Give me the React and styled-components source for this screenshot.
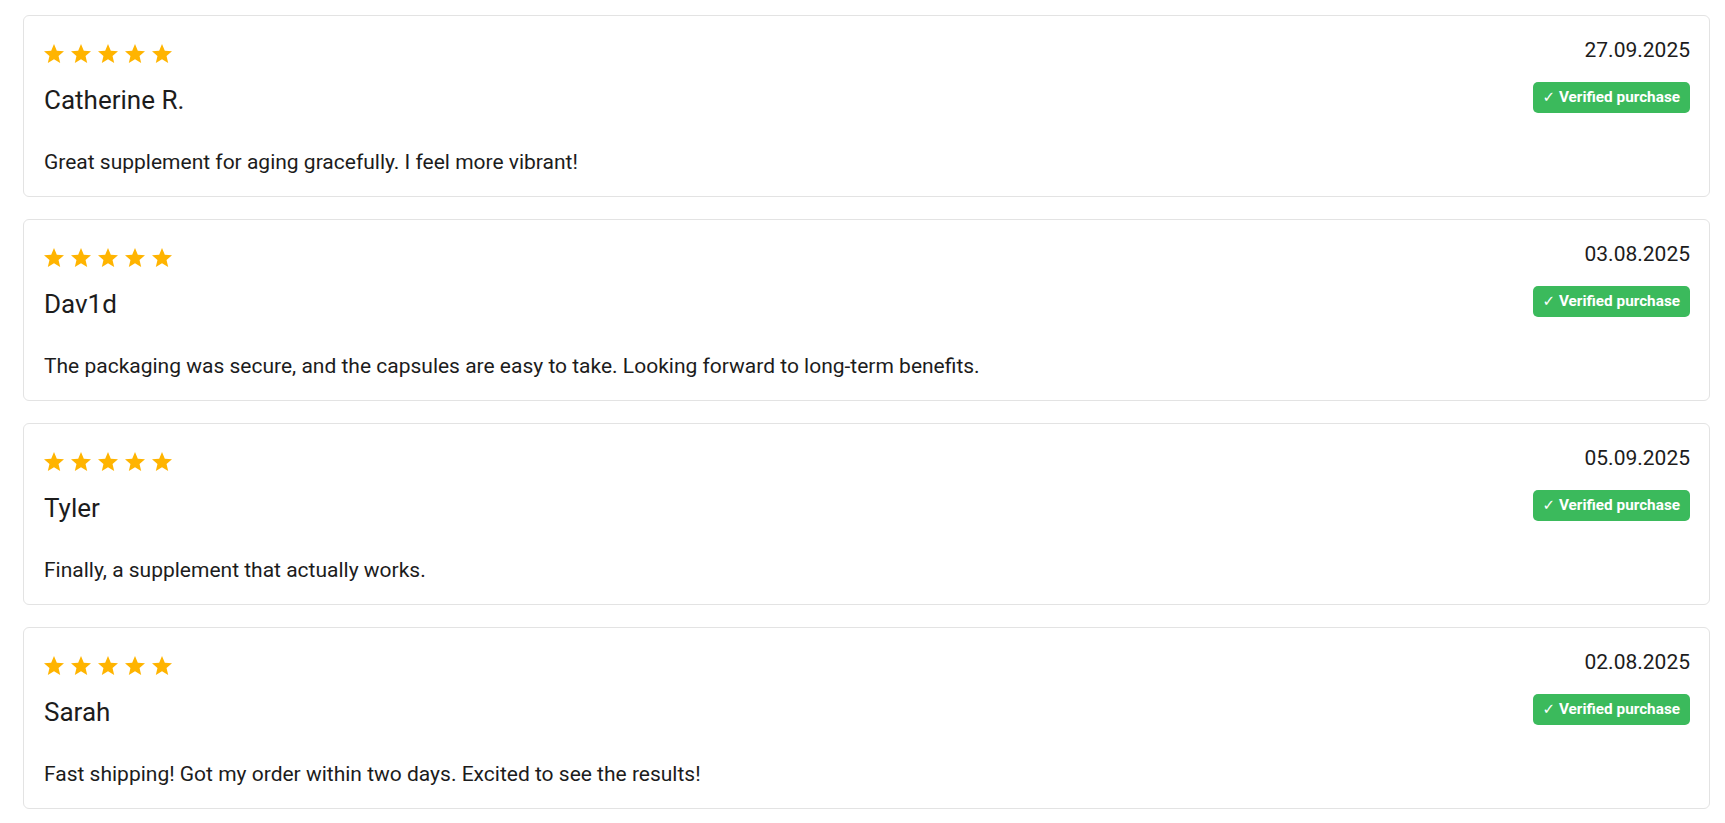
import React from "react";

// style
import styled, { createGlobalStyle } from "styled-components";

const reviews = [
  {
    name: "Catherine R.",
    date: "27.09.2025",
    text: "Great supplement for aging gracefully. I feel more vibrant!",
  },
  {
    name: "Dav1d",
    date: "03.08.2025",
    text: "The packaging was secure, and the capsules are easy to take. Looking forward to long-term benefits.",
  },
  {
    name: "Tyler",
    date: "05.09.2025",
    text: "Finally, a supplement that actually works.",
  },
  {
    name: "Sarah",
    date: "02.08.2025",
    text: "Fast shipping! Got my order within two days. Excited to see the results!",
  },
];

const Star = () => (
  <svg width="20" height="19" viewBox="2 2 20 19" aria-hidden="true">
    <path
      fill="#ffb400"
      d="M12 17.27L18.18 21l-1.64-7.03L22 9.24l-7.19-.61L12 2 9.19 8.63 2 9.24l5.46 4.73L5.82 21z"
    />
  </svg>
);

const ReviewCard = ({ review, rating = 5 }) => (
  <Card>
    <Header>
      <div>
        <Stars>
          {Array.from({ length: rating }).map((_, i) => (
            <Star key={i} />
          ))}
        </Stars>
        <Name>{review.name}</Name>
      </div>
      <Meta>
        <DateText>{review.date}</DateText>
        <Badge>
          <Check>✓</Check> Verified purchase
        </Badge>
      </Meta>
    </Header>
    <Body>{review.text}</Body>
  </Card>
);

const App = () => {
  return (
    <>
      <GlobalStyle />
      <List>
        {reviews.map((r) => (
          <ReviewCard key={r.name} review={r} />
        ))}
      </List>
    </>
  );
};

const GlobalStyle = createGlobalStyle`
  body {
    margin: 0;
    background: #fff;
    font-family: Roboto, "Liberation Sans", sans-serif;
    color: #1c1c1c;
  }
`;

const List = styled.main`
  display: flex;
  flex-direction: column;
  gap: 22px;
  padding: 15px 15px 15px 23px;
`;

const Card = styled.article`
  border: 1px solid #e3e3e3;
  border-radius: 6px;
  padding: 19px 19px 17.5px 20px;
  background: #fff;
`;

const Header = styled.div`
  display: flex;
  justify-content: space-between;
  align-items: flex-start;
`;

const Stars = styled.div`
  display: flex;
  gap: 7px;
  margin-top: 9px;
  svg {
    display: block;
  }
`;

const Name = styled.div`
  font-size: 26px;
  line-height: 30px;
  margin-top: 22px;
`;

const Meta = styled.div`
  display: flex;
  flex-direction: column;
  align-items: flex-end;
`;

const DateText = styled.div`
  font-size: 21px;
  line-height: 30px;
`;

const Badge = styled.span`
  margin-top: 17px;
  background: #3bba5c;
  color: #fff;
  font-weight: 700;
  font-size: 15.3px;
  line-height: 31px;
  height: 31px;
  padding: 0 10px;
  border-radius: 5px;
  white-space: nowrap;
`;

const Check = styled.span`
  font-family: "DejaVu Sans", sans-serif;
  font-weight: 400;
  font-size: 15px;
`;

const Body = styled.p`
  margin: 32px 0 0;
  font-size: 21px;
  line-height: 31.5px;
`;

export default App;
